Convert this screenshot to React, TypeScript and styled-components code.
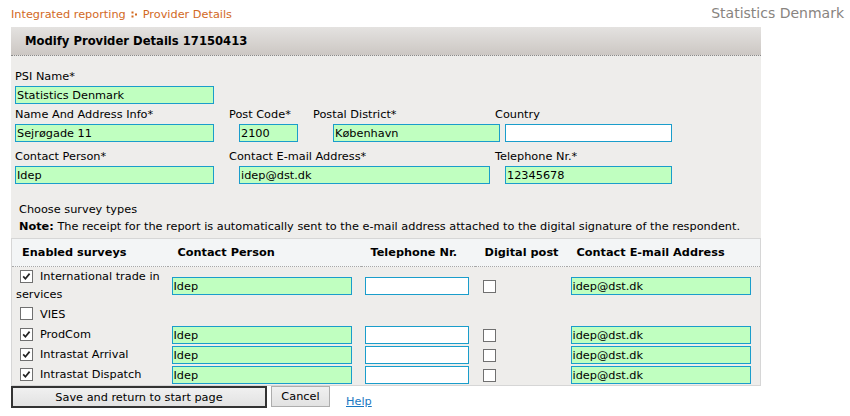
import styled, { createGlobalStyle } from "styled-components";

const GlobalStyle = createGlobalStyle`
  body {
    margin: 0;
    background: #fff;
    font-family: "DejaVu Sans", Verdana, sans-serif;
    font-size: 11.3px;
    color: #000;
  }
`;

const surveys = [
  { name: "International trade in services", on: true },
  { name: "VIES", on: false },
  { name: "ProdCom", on: true },
  { name: "Intrastat Arrival", on: true },
  { name: "Intrastat Dispatch", on: true },
];

const Check = ({ on }: { on: boolean }) => (
  <StBox>
    {on && (
      <svg width="11" height="11" viewBox="0 0 11 11">
        <path d="M2.2 5.4 L4.4 7.8 L8.6 2.6" fill="none" stroke="#222" strokeWidth="1.7" />
      </svg>
    )}
  </StBox>
);

const Field = ({
  label,
  value,
  width,
  inset = 0,
  inputWidth,
  blank,
}: {
  label: string;
  value?: string;
  width?: number;
  inset?: number;
  inputWidth: number;
  blank?: boolean;
}) => (
  <StField $width={width}>
    <StLabel>{label}</StLabel>
    <StInput $inset={inset} $width={inputWidth} $blank={blank} value={value ?? ""} readOnly />
  </StField>
);

const App = () => {
  return (
    <>
      <GlobalStyle />
      <StTop>
        <StCrumbs>
          Integrated reporting
          <svg width="7" height="7" viewBox="0 0 7 7">
            <rect x="0.5" y="0.5" width="2" height="2" fill="#d2691e" />
            <rect x="0.5" y="4.5" width="2" height="2" fill="#d2691e" />
            <rect x="4" y="2.5" width="2" height="2" fill="#d2691e" />
          </svg>
          Provider Details
        </StCrumbs>
        <StSite>Statistics Denmark</StSite>
      </StTop>

      <StPanel>
        <StPanelHead>Modify Provider Details 17150413</StPanelHead>
        <StForm>
          <StRow>
            <Field label="PSI Name*" value="Statistics Denmark" width={214} inputWidth={199} />
          </StRow>
          <StRow $gap={3}>
            <Field label="Name And Address Info*" value="Sejrøgade 11" width={214} inputWidth={199} />
            <Field label="Post Code*" value="2100" width={84} inset={10} inputWidth={59} />
            <Field label="Postal District*" value="København" width={182} inset={20} inputWidth={167} />
            <Field label="Country" inset={10} inputWidth={167} blank />
          </StRow>
          <StRow $gap={7}>
            <Field label="Contact Person*" value="Idep" width={214} inputWidth={199} />
            <Field label="Contact E-mail Address*" value="idep@dst.dk" width={266} inset={10} inputWidth={251} />
            <Field label="Telephone Nr.*" value="12345678" inset={10} inputWidth={167} />
          </StRow>
        </StForm>

        <StIntro>
          <div>Choose survey types</div>
          <div>
            <b>Note:</b> The receipt for the report is automatically sent to the e-mail address attached to
            the digital signature of the respondent.
          </div>
        </StIntro>

        <StTable>
          <colgroup>
            <col style={{ width: 156 }} />
            <col style={{ width: 193 }} />
            <col style={{ width: 114 }} />
            <col style={{ width: 92 }} />
            <col />
          </colgroup>
          <thead>
            <tr>
              <StTh>Enabled surveys</StTh>
              <StTh>Contact Person</StTh>
              <StTh>Telephone Nr.</StTh>
              <StTh>Digital post</StTh>
              <StTh>Contact E-mail Address</StTh>
            </tr>
          </thead>
          <tbody>
            {surveys.map((s) => (
              <tr key={s.name}>
                <StTd>
                  <StSurvey>
                    <Check on={s.on} />
                    {s.name}
                  </StSurvey>
                </StTd>
                {s.on ? (
                  <>
                    <StTd>
                      <StInput $width={180} value="Idep" readOnly />
                    </StTd>
                    <StTd>
                      <StInput $width={104} $blank value="" readOnly />
                    </StTd>
                    <StTd>
                      <Check on={false} />
                    </StTd>
                    <StTd>
                      <StInput $width={180} value="idep@dst.dk" readOnly />
                    </StTd>
                  </>
                ) : (
                  <StTd colSpan={4} />
                )}
              </tr>
            ))}
          </tbody>
        </StTable>
      </StPanel>

      <StActions>
        <StButton $primary>Save and return to start page</StButton>
        <StButton>Cancel</StButton>
        <StHelp href="#">Help</StHelp>
      </StActions>
    </>
  );
};

const StTop = styled.div`
  height: 27px;
  display: flex;
  align-items: center;
  justify-content: space-between;
  padding: 0 6px 0 11px;
`;

const StCrumbs = styled.div`
  display: flex;
  align-items: center;
  gap: 5px;
  color: #d2691e;
  font-size: 11.3px;
  margin-top: 1px;
`;

const StSite = styled.div`
  color: #888480;
  font-size: 14px;
  margin-top: -1px;
`;

const StPanel = styled.div`
  margin-left: 11px;
  width: 750px;
  background: #eeedeb;
`;

const StPanelHead = styled.div`
  height: 28px;
  line-height: 29px;
  padding-left: 14px;
  font-weight: bold;
  font-size: 11.6px;
  background: linear-gradient(#e4e2e0, #ccc7c3);
  border-bottom: 1px dotted #8a8a8a;
`;

const StForm = styled.div`
  padding: 13px 0 0 4px;
`;

const StRow = styled.div<{ $gap?: number }>`
  display: flex;
  margin-top: ${(p) => p.$gap ?? 0}px;
`;

const StField = styled.div<{ $width?: number }>`
  width: ${(p) => (p.$width ? `${p.$width}px` : "auto")};
  flex: ${(p) => (p.$width ? "none" : "1")};
`;

const StLabel = styled.div`
  height: 16px;
  line-height: 16px;
  margin-bottom: 1px;
`;

const StInput = styled.input<{ $width: number; $inset?: number; $blank?: boolean }>`
  display: block;
  box-sizing: border-box;
  width: ${(p) => p.$width}px;
  height: 18px;
  margin: 0 0 0 ${(p) => p.$inset ?? 0}px;
  padding: 1px 1px 0;
  border: 1px solid #1a9dcb;
  border-radius: 0;
  background: ${(p) => (p.$blank ? "#fff" : "#c0ffc0")};
  font-family: "DejaVu Sans", Verdana, sans-serif;
  font-size: 11.3px;
  color: #000;
  outline: none;
`;

const StIntro = styled.div`
  padding: 17px 0 3px 8px;
  line-height: 17px;
`;

const StTable = styled.table`
  width: 750px;
  table-layout: fixed;
  border-collapse: collapse;
  border: 1px solid #d6d6d6;
`;

const StTh = styled.th`
  height: 27px;
  padding: 0 0 0 10px;
  text-align: left;
  font-size: 11.3px;
  background: #f3f5f6;
  border-bottom: 1px dotted #a8a8a8;
  white-space: nowrap;
`;

const StTd = styled.td`
  padding: 1px 4px;
  vertical-align: middle;
  line-height: 18px;
`;

const StSurvey = styled.div`
  & > span {
    margin: 0 7px 0 4px;
    vertical-align: -2px;
  }
`;

const StBox = styled.span`
  display: inline-flex;
  align-items: center;
  justify-content: center;
  box-sizing: border-box;
  width: 13px;
  height: 13px;
  margin-left: 4px;
  border: 1px solid #707070;
  background: #fff;
  vertical-align: middle;
`;

const StActions = styled.div`
  display: flex;
  align-items: flex-start;
  gap: 4px;
  padding-left: 11px;
`;

const StButton = styled.button<{ $primary?: boolean }>`
  box-sizing: border-box;
  height: ${(p) => (p.$primary ? 22 : 21)}px;
  width: ${(p) => (p.$primary ? 256 : 59)}px;
  padding: 0;
  border: ${(p) => (p.$primary ? "2px solid #333" : "1px solid #adadad")};
  background: linear-gradient(#f0f0f0, #e2e2e2);
  font-family: "DejaVu Sans", Verdana, sans-serif;
  font-size: 11.3px;
  color: #000;
`;

const StHelp = styled.a`
  margin: 9px 0 0 12px;
  color: #1a78c2;
  font-size: 11.3px;
`;

export default App;
